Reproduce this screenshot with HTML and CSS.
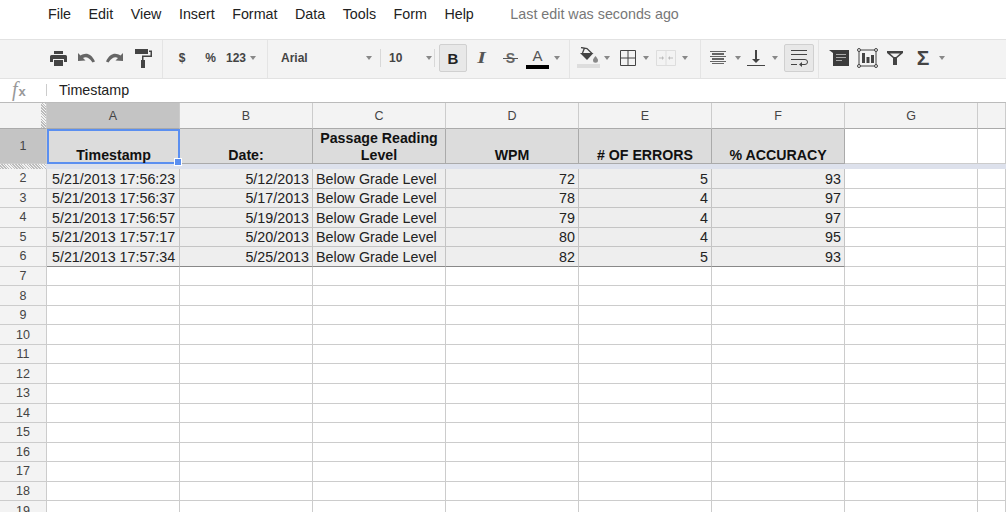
FILE: index.html
```html
<!DOCTYPE html>
<html lang="en">
<head>
  <meta charset="UTF-8">
  <title>Spreadsheet</title>
  <link rel="stylesheet" href="styles.css">
</head>
<body>
  <!-- Menu -->
  <div class="menubar">
    <span class="menu-item">File</span>
    <span class="menu-item">Edit</span>
    <span class="menu-item">View</span>
    <span class="menu-item">Insert</span>
    <span class="menu-item">Format</span>
    <span class="menu-item">Data</span>
    <span class="menu-item">Tools</span>
    <span class="menu-item">Form</span>
    <span class="menu-item">Help</span>
    <span class="last-edit">Last edit was seconds ago</span>
  </div>

  <!-- Toolbar -->
  <div class="toolbar">
    <div class="group group-history">
      <span class="tool w28">
        <svg width="17" height="15" viewBox="0 0 17 15"><path fill="#444" d="M4 0h9v3H4zM1.500 4h14A1.500 1.500 0 0 1 17 5.500V11h-3V8H3v3H0V5.500A1.500 1.500 0 0 1 1.500 4zM4 9h9v6H4z"/></svg>
      </span>
      <span class="tool w28">
        <svg width="17" height="10" viewBox="0 0 17 10"><path fill="#666" d="M0 0l2.500 2.500C7-.5 13-.5 17 8.500l-2.500 1C11 4.500 8 3.500 5 5l2.500 2.500L0 8z"/></svg>
      </span>
      <span class="tool w29">
        <svg width="17" height="10" viewBox="0 0 17 10"><path fill="#666" d="M17 0l-2.500 2.500C10-.5 4-.5 0 8.500l2.500 1C6 4.500 9 3.500 12 5L9.500 7.500 17 8z"/></svg>
      </span>
      <span class="tool w29">
        <svg width="17" height="19" viewBox="0 0 17 19"><path fill="#444" d="M0 0h13v5H0zM14 1.500h3V8H8.500v3H10v8H6V11h1V6.500h8.500V3H14z"/></svg>
      </span>
    </div>

    <div class="group group-number">
      <span class="tool w28 label">$</span>
      <span class="tool w29 label">%</span>
      <span class="tool w22 label">123</span>
      <span class="caret caret-number"></span>
    </div>

    <div class="group group-font">
      <span class="label">Arial</span>
      <span class="caret"></span>
    </div>
    <div class="group group-size">
      <span class="label">10</span>
      <span class="caret"></span>
    </div>

    <div class="group group-style">
      <span class="tool w28 active serif-b">B</span>
      <span class="tool w29 icon-i">I</span>
      <span class="tool w29 icon-s">S</span>
      <span class="tool w25 text-color"><span class="text-color-a">A</span><span class="text-color-bar"></span></span>
      <span class="caret caret-color"></span>
    </div>

    <div class="group group-cell">
      <span class="tool w24 fill-tool">
        <svg width="20" height="16" viewBox="0 0 20 16"><path fill="#444" d="M2 6h13.500L9 13z"/><path fill="none" stroke="#444" stroke-width="1.300" d="M3 .5L9 1.500l5 5M6.500 1l-2 5"/><path fill="#888" d="M17.500 9c1.500 2 2.500 3 2.500 4.200a2.500 2.500 0 0 1-5 0c0-1.200 1-2.200 2.500-4.200z"/></svg>
        <span class="fill-bar"></span>
      </span>
      <span class="caret caret-fill"></span>
      <span class="tool w17">
        <svg width="16" height="16" viewBox="0 0 16 16"><path fill="none" stroke="#444" d="M.5.500h15v15H.5zM8 0v16M0 8h16"/></svg>
      </span>
      <span class="caret caret-borders"></span>
      <span class="tool w19">
        <svg width="20" height="16" viewBox="0 0 20 16"><path fill="none" stroke="#ddd" d="M.5.500h19v15H.5zM10 0v16"/><path fill="#bbb" d="M3 7.500h3V6l2 2-2 2V8.500H3zM17 7.500h-3V6l-2 2 2 2V8.500h3z"/></svg>
      </span>
      <span class="caret caret-merge"></span>
    </div>

    <div class="group group-align">
      <span class="tool w16">
        <svg width="16" height="14" viewBox="0 0 16 14"><path fill="#666" d="M0 0h16v1H0zM2 2h12v2H2zM0 5h16v1H0zM2 7h12v2H2zM0 10h16v1H0zM2 12h12v1H2z"/></svg>
      </span>
      <span class="caret caret-align"></span>
      <span class="tool w18">
        <svg width="18" height="17" viewBox="0 0 18 17"><path fill="#444" d="M8 0h2v9h3l-4 4-4-4h3zM0 15h18v1H0z"/></svg>
      </span>
      <span class="caret caret-valign"></span>
      <span class="tool wrap-tool active">
        <svg width="17" height="17" viewBox="0 0 17 17"><path fill="#444" d="M0 0h16v1H0zM0 4h16v1H0zM0 9h13v1H0zM0 14h6v1H0z"/><path fill="none" stroke="#444" d="M13 9.500h1a2.500 2.500 0 0 1 0 5H10"/><path fill="#444" d="M11 12v5l-3-2.500z"/></svg>
      </span>
    </div>

    <div class="group group-insert">
      <span class="tool w28">
        <svg width="20" height="17" viewBox="0 0 20 17"><path fill="#3c3c3c" d="M0 0h20v16H4V3z"/><path fill="#aaa" d="M7 4h10v1H7zM7 7h10v1H7zM7 10h6v1H7z"/></svg>
      </span>
      <span class="tool w28">
        <svg width="21" height="20" viewBox="0 0 21 20"><path fill="none" stroke="#444" d="M2 2h17v16H2z"/><g fill="#eee" stroke="#444"><circle cx="2" cy="2" r="1.500"/><circle cx="19" cy="2" r="1.500"/><circle cx="2" cy="18" r="1.500"/><circle cx="19" cy="18" r="1.500"/></g><path fill="#444" d="M5 5h3v10H5zM9.500 9h3v6h-3zM14 7h3v8h-3z"/></svg>
      </span>
      <span class="tool w28">
        <svg width="16" height="14" viewBox="0 0 16 14"><path fill="#444" d="M0 0h16v2l-6 5v7H6V7L0 2zM3 2.500L7 6h2l4-3.500z"/></svg>
      </span>
      <span class="tool w28 sigma">Σ</span>
      <span class="caret caret-sigma"></span>
    </div>
  </div>

  <!-- Formula bar -->
  <div class="formula-bar">
    <span class="fx"><i>f</i><small>x</small></span>
    <span class="formula-sep"></span>
    <span class="formula-text">Timestamp</span>
  </div>

  <!-- Sheet -->
  <div class="sheet">
    <div class="row col-heads">
      <div class="corner"></div>
      <div class="cell head selected">A</div>
      <div class="cell head">B</div>
      <div class="cell head">C</div>
      <div class="cell head">D</div>
      <div class="cell head">E</div>
      <div class="cell head">F</div>
      <div class="cell head">G</div>
      <div class="cell head"></div>
    </div>

    <div class="row frozen">
      <div class="num selected">1</div>
      <div class="cell title active-cell"><span>Timestamp</span><span class="handle"></span></div>
      <div class="cell title"><span>Date:</span></div>
      <div class="cell title"><span>Passage Reading Level</span></div>
      <div class="cell title"><span>WPM</span></div>
      <div class="cell title"><span># OF ERRORS</span></div>
      <div class="cell title"><span>% ACCURACY</span></div>
      <div class="cell"></div>
      <div class="cell"></div>
    </div>
    <div class="freeze-bar"><span class="freeze-hatch"></span></div>

    <div class="row data">
      <div class="num">2</div>
      <div class="cell">5/21/2013 17:56:23</div>
      <div class="cell right">5/12/2013</div>
      <div class="cell">Below Grade Level</div>
      <div class="cell right">72</div>
      <div class="cell right">5</div>
      <div class="cell right">93</div>
      <div class="cell"></div>
      <div class="cell"></div>
    </div>
    <div class="row data">
      <div class="num">3</div>
      <div class="cell">5/21/2013 17:56:37</div>
      <div class="cell right">5/17/2013</div>
      <div class="cell">Below Grade Level</div>
      <div class="cell right">78</div>
      <div class="cell right">4</div>
      <div class="cell right">97</div>
      <div class="cell"></div>
      <div class="cell"></div>
    </div>
    <div class="row data">
      <div class="num">4</div>
      <div class="cell">5/21/2013 17:56:57</div>
      <div class="cell right">5/19/2013</div>
      <div class="cell">Below Grade Level</div>
      <div class="cell right">79</div>
      <div class="cell right">4</div>
      <div class="cell right">97</div>
      <div class="cell"></div>
      <div class="cell"></div>
    </div>
    <div class="row data">
      <div class="num">5</div>
      <div class="cell">5/21/2013 17:57:17</div>
      <div class="cell right">5/20/2013</div>
      <div class="cell">Below Grade Level</div>
      <div class="cell right">80</div>
      <div class="cell right">4</div>
      <div class="cell right">95</div>
      <div class="cell"></div>
      <div class="cell"></div>
    </div>
    <div class="row data last-data">
      <div class="num">6</div>
      <div class="cell">5/21/2013 17:57:34</div>
      <div class="cell right">5/25/2013</div>
      <div class="cell">Below Grade Level</div>
      <div class="cell right">82</div>
      <div class="cell right">5</div>
      <div class="cell right">93</div>
      <div class="cell"></div>
      <div class="cell"></div>
    </div>

    <div class="row"><div class="num">7</div><div class="cell"></div><div class="cell"></div><div class="cell"></div><div class="cell"></div><div class="cell"></div><div class="cell"></div><div class="cell"></div><div class="cell"></div></div>
    <div class="row"><div class="num">8</div><div class="cell"></div><div class="cell"></div><div class="cell"></div><div class="cell"></div><div class="cell"></div><div class="cell"></div><div class="cell"></div><div class="cell"></div></div>
    <div class="row"><div class="num">9</div><div class="cell"></div><div class="cell"></div><div class="cell"></div><div class="cell"></div><div class="cell"></div><div class="cell"></div><div class="cell"></div><div class="cell"></div></div>
    <div class="row"><div class="num">10</div><div class="cell"></div><div class="cell"></div><div class="cell"></div><div class="cell"></div><div class="cell"></div><div class="cell"></div><div class="cell"></div><div class="cell"></div></div>
    <div class="row"><div class="num">11</div><div class="cell"></div><div class="cell"></div><div class="cell"></div><div class="cell"></div><div class="cell"></div><div class="cell"></div><div class="cell"></div><div class="cell"></div></div>
    <div class="row"><div class="num">12</div><div class="cell"></div><div class="cell"></div><div class="cell"></div><div class="cell"></div><div class="cell"></div><div class="cell"></div><div class="cell"></div><div class="cell"></div></div>
    <div class="row"><div class="num">13</div><div class="cell"></div><div class="cell"></div><div class="cell"></div><div class="cell"></div><div class="cell"></div><div class="cell"></div><div class="cell"></div><div class="cell"></div></div>
    <div class="row"><div class="num">14</div><div class="cell"></div><div class="cell"></div><div class="cell"></div><div class="cell"></div><div class="cell"></div><div class="cell"></div><div class="cell"></div><div class="cell"></div></div>
    <div class="row"><div class="num">15</div><div class="cell"></div><div class="cell"></div><div class="cell"></div><div class="cell"></div><div class="cell"></div><div class="cell"></div><div class="cell"></div><div class="cell"></div></div>
    <div class="row"><div class="num">16</div><div class="cell"></div><div class="cell"></div><div class="cell"></div><div class="cell"></div><div class="cell"></div><div class="cell"></div><div class="cell"></div><div class="cell"></div></div>
    <div class="row"><div class="num">17</div><div class="cell"></div><div class="cell"></div><div class="cell"></div><div class="cell"></div><div class="cell"></div><div class="cell"></div><div class="cell"></div><div class="cell"></div></div>
    <div class="row"><div class="num">18</div><div class="cell"></div><div class="cell"></div><div class="cell"></div><div class="cell"></div><div class="cell"></div><div class="cell"></div><div class="cell"></div><div class="cell"></div></div>
    <div class="row"><div class="num">19</div><div class="cell"></div><div class="cell"></div><div class="cell"></div><div class="cell"></div><div class="cell"></div><div class="cell"></div><div class="cell"></div><div class="cell"></div></div>
  </div>
</body>
</html>
```

FILE: styles.css
```css
html, body {
  margin: 0;
  height: 512px;
  overflow: hidden;
  background: #fff;
}
body {
  font-family: "Liberation Sans", Arial, sans-serif;
  font-size: 14.3px;
  color: #222;
}

/* Menu */
.menubar {
  display: flex;
  align-items: center;
  height: 28px;
  padding-left: 48px;
  margin-bottom: 11px;
  gap: 17.5px;
}
.last-edit {
  margin-left: 19px;
  color: #777;
}

/* Toolbar */
.toolbar {
  display: flex;
  box-sizing: border-box;
  height: 40px;
  padding-left: 44px;
  background: #f3f3f3;
  border-top: 1px solid #e2e2e2;
  border-bottom: 1px solid #e2e2e2;
  font-size: 12px;
  color: #444;
}
.group {
  display: flex;
  align-items: center;
  box-sizing: border-box;
  padding-bottom: 2px;
  border-right: 1px solid #e4e4e4;
}
.group-history { width: 119px; }
.group-number { width: 105px; padding-left: 5px; }
.group-font {
  position: relative;
  width: 113px;
  padding: 0 9px 2px 13px;
  justify-content: space-between;
  border-right: 0;
}
.group-size {
  position: relative;
  width: 54px;
  padding: 0 3px 2px 8px;
  justify-content: space-between;
  border-right: 0;
}
.group-font::after,
.group-size::after {
  content: "";
  position: absolute;
  top: 9px;
  width: 1px;
  height: 18px;
  background: #d8d8d8;
}
.group-font::after { left: 112px; }
.group-size::after { left: 53px; }
.group-style { width: 135px; padding-left: 4px; }
.group-cell { width: 131px; padding-left: 6px; }
.group-align { width: 118px; padding-left: 9px; }
.group-insert { border-right: 0; padding-left: 6px; }

.label { font-weight: bold; color: #444; }
.tool {
  display: flex;
  align-items: center;
  justify-content: center;
  flex: none;
}
.w16 { width: 16px; }
.w17 { width: 17px; }
.w18 { width: 18px; }
.w19 { width: 20px; }
.w22 { width: 22px; }
.w24 { width: 24px; }
.w25 { width: 25px; }
.w28 { width: 28px; }
.w29 { width: 29px; }

.active {
  box-sizing: border-box;
  height: 28px;
  background: #e8e8e8;
  border: 1px solid #d0d0d0;
  border-radius: 2px;
}
.serif-b {
  font-weight: bold;
  font-size: 15px;
  color: #222;
}
.icon-i {
  font-family: "Liberation Serif", serif;
  font-style: italic;
  font-weight: bold;
  font-size: 17px;
  color: #555;
  transform: scaleX(1.3);
}
.icon-s {
  position: relative;
  font-weight: bold;
  font-size: 14px;
  color: #666;
}
.icon-s::after {
  content: "";
  position: absolute;
  left: 7px;
  top: 8px;
  width: 15px;
  height: 1px;
  background: #555;
}
.text-color {
  flex-direction: column;
  height: 28px;
}
.text-color-a {
  font-size: 15px;
  line-height: 17px;
  color: #555;
}
.text-color-bar {
  width: 23px;
  height: 4px;
  margin-top: 1px;
  background: #000;
}
.fill-tool {
  flex-direction: column;
  height: 30px;
  margin-top: -2px;
}
.fill-bar {
  width: 23px;
  height: 4px;
  margin-top: 1px;
  background: #ddd;
}
.wrap-tool {
  width: 30px;
  margin-left: 6px;
}
.sigma {
  font-size: 21px;
  font-weight: bold;
  color: #444;
}

.caret {
  flex: none;
  width: 0;
  height: 0;
  border-style: solid;
  border-width: 4px 3.5px 0;
  border-color: #888 transparent transparent;
}
.caret-number { margin-left: 3px; }
.caret-color { margin-left: 4px; }
.caret-fill { margin-left: 4px; }
.caret-borders { margin-left: 7px; }
.caret-merge { margin-left: 6px; }
.caret-align { margin-left: 9px; }
.caret-valign { margin-left: 7px; }
.caret-sigma { margin-left: 2px; }

.group-cell .w17 { margin-left: 9px; }
.group-cell .w19 { margin-left: 7px; }
.group-align .w18 { margin-left: 6px; }

/* Formula bar */
.formula-bar {
  display: flex;
  align-items: center;
  box-sizing: border-box;
  height: 24px;
  padding-bottom: 1px;
  border-bottom: 1px solid #bbb;
}
.fx {
  width: 46px;
  padding-left: 12px;
  box-sizing: border-box;
  font-family: "Liberation Serif", serif;
  font-size: 20px;
  line-height: 17px;
  color: #999;
}
.fx small {
  margin-left: 1px;
  font-family: "Liberation Sans", sans-serif;
  font-size: 13px;
  font-weight: bold;
}
.formula-sep {
  width: 1px;
  height: 12px;
  background: #ccc;
}
.formula-text { margin-left: 12px; color: #222; }

/* Sheet */
.sheet { font-size: 14.3px; color: #222; }
.row {
  display: grid;
  grid-template-columns: 47px repeat(7, 133px) 1fr;
  box-sizing: border-box;
  height: 19.56px;
}
.row > div {
  display: flex;
  align-items: center;
  box-sizing: border-box;
  border-right: 1px solid #ccc;
  border-bottom: 1px solid #ccc;
  min-width: 0;
}
.row .num, .row .corner {
  justify-content: center;
  background: #f3f3f3;
  font-size: 12.5px;
  color: #444;
}
.cell {
  padding: 0 3px 0 5px;
  white-space: nowrap;
}
.cell:nth-child(4) { padding-left: 3px; }
.right { justify-content: flex-end; }

.col-heads { height: 26px; }
.row .head {
  justify-content: center;
  padding: 0;
  background: #f3f3f3;
  font-size: 12.5px;
  color: #444;
  border-bottom-color: #aaa;
}
.row .corner {
  border-bottom-color: #aaa;
  background-image: repeating-linear-gradient(45deg, #bbb 0 1px, #f3f3f3 1px 2px);
  background-size: 5px 100%;
  background-position: right top;
  background-repeat: no-repeat;
}
.row .head.selected { background-color: #c4c4c4; }
.row .num.selected { background-color: #c4c4c4; }

.frozen { height: 35px; }
.row .title {
  align-items: flex-end;
  justify-content: center;
  padding: 0 2px;
  background: #dcdcdc;
  font-size: 14.2px;
  font-weight: bold;
  line-height: 17px;
  text-align: center;
  white-space: normal;
  color: #111;
  border-color: #aaa;
}
.title span { margin-bottom: -1px; }
.row .active-cell {
  position: relative;
  border: 2px solid #5b8ff0;
}
.active-cell span { margin-bottom: -2px; }
.active-cell .handle {
  position: absolute;
  right: -4px;
  bottom: -4px;
  width: 6px;
  height: 6px;
  margin: 0;
  background: #5b8ff0;
  border: 1px solid #fff;
}
.freeze-bar {
  height: 5px;
  background: #dde1ec;
}
.freeze-hatch {
  display: block;
  width: 46px;
  height: 100%;
  background: repeating-linear-gradient(45deg, #bbb 0 1px, #f3f3f3 1px 2px);
}

.data .cell { padding-top: 1px; }
.data .cell:nth-child(-n+7) {
  background: #eee;
  border-color: #c4c4c4;
}
.last-data .cell:nth-child(-n+7) { border-bottom-color: #888; }
```
